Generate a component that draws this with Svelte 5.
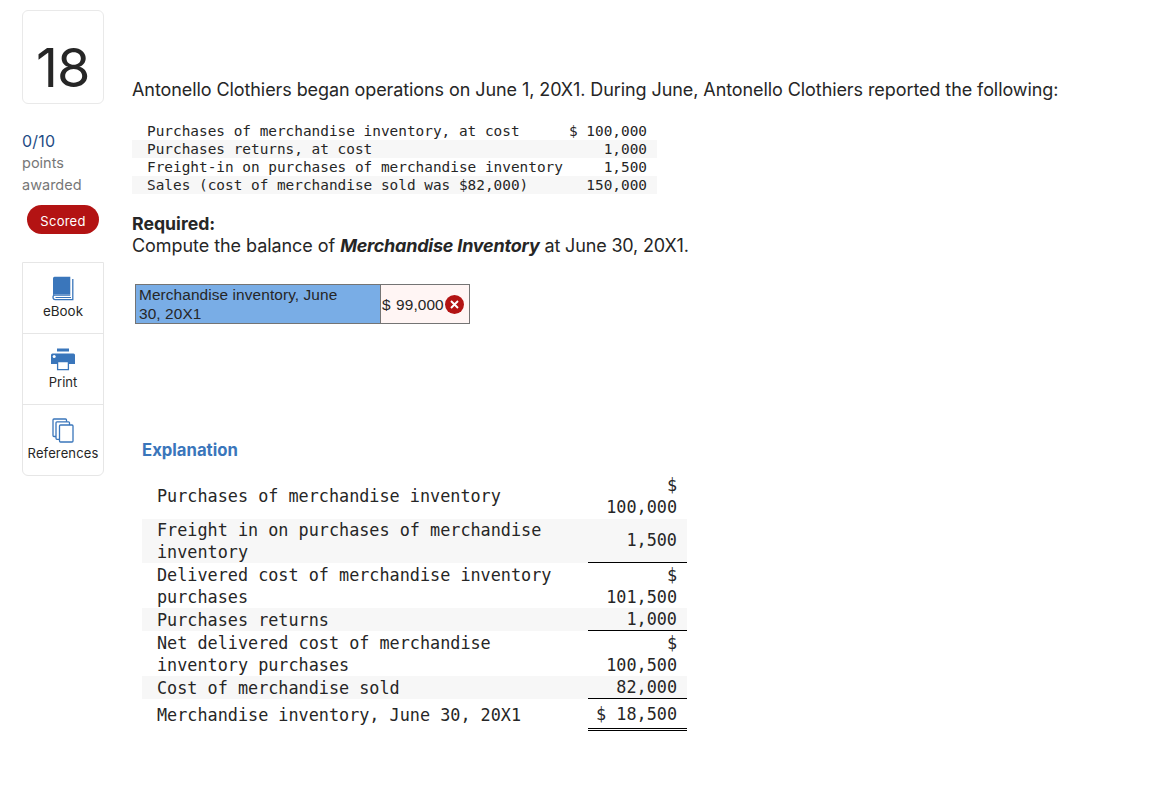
<script>
  const given = [
    ['Purchases of merchandise inventory, at cost', '$ 100,000'],
    ['Purchases returns, at cost', '1,000'],
    ['Freight-in on purchases of merchandise inventory', '1,500'],
    ['Sales (cost of merchandise sold was $82,000)', '150,000']
  ];
  const solution = [
    { label: ['Purchases of merchandise inventory'], value: ['$', '100,000'], kind: 'two first' },
    { label: ['Freight in on purchases of merchandise', 'inventory'], value: ['1,500'], kind: 'tall shade rule' },
    { label: ['Delivered cost of merchandise inventory', 'purchases'], value: ['$', '101,500'], kind: 'two' },
    { label: ['Purchases returns'], value: ['1,000'], kind: 'shade rule' },
    { label: ['Net delivered cost of merchandise', 'inventory purchases'], value: ['$', '100,500'], kind: 'two' },
    { label: ['Cost of merchandise sold'], value: ['82,000'], kind: 'shade rule' },
    { label: ['Merchandise inventory, June 30, 20X1'], value: ['$ 18,500'], kind: 'total' }
  ];
</script>

<div class="page">
  <aside>
    <div class="number"><span>18</span></div>
    <div class="points"><b>0/10</b><span>points</span><span>awarded</span></div>
    <div class="pill">Scored</div>
    <nav>
      <div class="tool">
        <svg width="24" height="26" viewBox="0 0 24 26">
          <path d="M3.500.8H19.300V18.600H3.800Q2.600 18.700 2 19.600V2.500Q2 .8 3.500.8z" fill="#3a76bb" />
          <path d="M21.800 3v20.700H4.200Q2 23.700 2 21.300Q2 19.200 4 19.200H19.300" fill="none" stroke="#3a76bb" stroke-width="1.300" />
          <path d="M4.500 21.500h15.500" stroke="#3a76bb" stroke-width="1" />
        </svg>
        <span class="ebook">eBook</span>
      </div>
      <div class="tool">
        <svg width="24" height="26" viewBox="0 0 24 26">
          <path d="M6 2.500h12v3H6z M1.500 7.500h21Q24 7.500 24 9V18h-6v-2H6v2H0V9Q0 7.500 1.500 7.500z" fill="#3a76bb" />
          <circle cx="3.200" cy="10.500" r="1.500" fill="#fff" />
          <path d="M6.600 15.500h10.800v8.200H6.600z" fill="#fff" stroke="#3a76bb" stroke-width="1.300" />
        </svg>
        <span class="print">Print</span>
      </div>
      <div class="tool">
        <svg width="24" height="26" viewBox="0 0 24 26" fill="#fff" stroke="#3a76bb" stroke-width="1.300">
          <rect x="2" y="2" width="13.500" height="17.500" rx="1" />
          <rect x="5" y="4.800" width="13.500" height="17.500" rx="1" />
          <rect x="8.500" y="8" width="13.500" height="17" rx="1" />
        </svg>
        <span class="refs">References</span>
      </div>
    </nav>
  </aside>

  <main>
    <p class="intro">Antonello Clothiers began operations on June 1, 20X1. During June, Antonello Clothiers reported the following:</p>
    <div class="given">
      {#each given as [label, value]}
        <div class="line"><span>{label}</span><span>{value}</span></div>
      {/each}
    </div>
    <div class="required">Required:</div>
    <p class="task"><span>Compute the balance of</span><em>Merchandise Inventory</em><span class="date">at June 30, 20X1.</span></p>
    <div class="answer">
      <div class="name">Merchandise inventory, June<br />30, 20X1</div>
      <div class="entry">
        <span>$</span><span class="amount">99,000</span>
        <svg width="19" height="19" viewBox="0 0 19 19">
          <circle cx="9.500" cy="9.500" r="9.500" fill="#b31313" />
          <path d="M6 6l7 7m0-7l-7 7" stroke="#fff" stroke-width="1.900" />
        </svg>
      </div>
    </div>
    <section>
      <h2>Explanation</h2>
      {#each solution as row}
        <div class="row {row.kind}">
          <div class="label">{#each row.label as l}<div>{l}</div>{/each}</div>
          <div class="value">{#each row.value as v}<div>{v}</div>{/each}</div>
        </div>
      {/each}
    </section>
  </main>
</div>

<style>
  :global(body) { margin: 0; background: #fff; }
  * { box-sizing: border-box; }
  p, h2 { margin: 0; }
  .page { display: flex; gap: 28px; height: 796px; padding: 10px 0 0 22px; font-family: Inter, sans-serif; color: #262626; overflow: hidden; white-space: nowrap; }
  aside { width: 82px; flex: none; }
  .number { height: 94px; border: 1px solid #e9e9e9; border-radius: 6px; padding: 24px 0 0 13px; font-size: 54px; line-height: 66px; letter-spacing: -1px; }
  .points { display: flex; flex-direction: column; padding-top: 26px; font-size: 14.5px; line-height: 22px; color: #777; }
  .points b { font-weight: 400; font-size: 16px; letter-spacing: .2px; color: #1f4d86; }
  .pill { width: 72px; height: 29px; margin: 9px 0 0 5px; border-radius: 15px; background: #b31313; color: #fff; font-size: 13px; line-height: 33px; text-align: center; letter-spacing: .25px; }
  nav { margin-top: 28px; border: 1px solid #e6e6e6; border-radius: 0 0 6px 6px; }
  .tool { height: 71px; display: flex; flex-direction: column; align-items: center; padding-top: 12px; font-size: 13px; line-height: 18px; }
  .tool:first-child { height: 70px; padding-top: 13px; }
  .tool:first-child svg { margin-bottom: 0; }
  .tool + .tool { border-top: 1px solid #e6e6e6; }
  .tool svg { flex: none; margin-bottom: 1px; }
  .ebook { font-size: 13.4px; }
  .refs { letter-spacing: .12px; }
  main { width: 960px; flex: none; padding-top: 69px; }
  .intro { font-size: 18px; line-height: 22px; letter-spacing: -.083px; }
  .given { width: 525px; margin-top: 21px; font: 14.4px/18px "DejaVu Sans Mono", monospace; }
  .line { height: 18px; display: flex; justify-content: space-between; padding: 0 10px 0 15px; }
  .line:nth-child(even) { background: #f7f7f7; }
  .required { margin-top: 19px; font-size: 17.7px; line-height: 22px; font-weight: 700; }
  .task { display: flex; font-size: 18px; line-height: 22px; letter-spacing: -.06px; }
  em { font-weight: 700; margin: 0 5px; letter-spacing: -.22px; }
  .date { letter-spacing: -.16px; }
  .answer { display: flex; width: 335px; height: 40px; margin: 27px 0 0 3px; border: 1px solid #747474; font: 15.4px/19px "Liberation Sans", Arial, sans-serif; }
  .name { width: 245px; padding: 0 3px; border-right: 1px solid #747474; background: #79ade6; letter-spacing: .1px; }
  .entry { flex: 1; display: flex; align-items: center; padding-left: 1px; background: #fff5f4; }
  .amount { margin-left: 5.500px; letter-spacing: .1px; }
  .entry svg { margin-left: 1.500px; }
  section { width: 545px; margin: 115px 0 0 10px; font: 16.81px/22px "DejaVu Sans Mono", monospace; }
  h2 { height: 34px; font: 700 16.7px/22px Inter, sans-serif; color: #3a76bb; }
  .row { display: flex; height: 23px; }
  .two { height: 45px; }
  .two.first { height: 46px; }
  .tall { height: 44px; }
  .tall .value { padding-bottom: 1px; }
  .total { height: 32px; }
  .shade { background: #f7f7f7; }
  .label { width: 446px; padding-left: 15px; display: flex; flex-direction: column; justify-content: center; }
  .value { width: 99px; padding-right: 10px; text-align: right; display: flex; flex-direction: column; justify-content: center; }
  .rule .value { border-bottom: 1px solid #000; }
  .total .value { border-bottom: 3px double #000; }
</style>
